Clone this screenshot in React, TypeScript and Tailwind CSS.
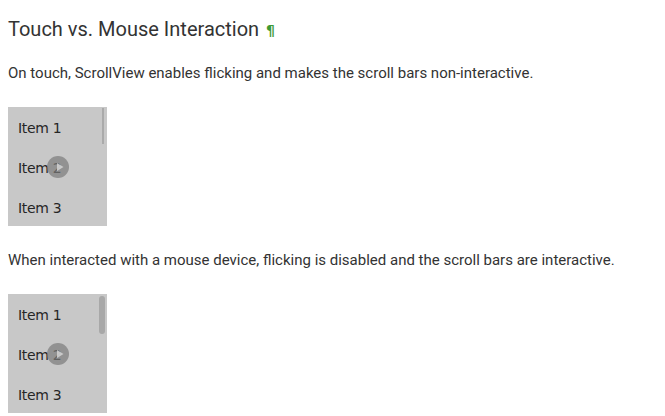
import React from "react";

function Cursor() {
  return (
    <span className="absolute left-[29px] top-[-2px] w-[22px] h-[22px] rounded-full bg-[#7a7a7a]/70 flex items-center justify-center">
      <svg width="12" height="12" viewBox="0 0 12 12" className="ml-[4px]">
        <path d="M3 2 L9.5 6 L3 10 Z" fill="#cfcfcf" fillOpacity="0.9" />
      </svg>
    </span>
  );
}

function Box({ wide }: { wide?: boolean }) {
  return (
    <div className="flex w-[99px] h-[119px] bg-[#c8c8c8] text-[14px] text-[#262626] font-['DejaVu_Sans',sans-serif]">
      <div className="flex-1 flex flex-col pl-[10px] pt-[11px] gap-[19px] leading-[21px] tracking-[-0.3px]">
        <div>Item 1</div>
        <div className="relative">
          Item 2
          <Cursor />
        </div>
        <div>Item 3</div>
      </div>
      {wide ? (
        <div className="mt-[2px] mr-[2px] w-[6px] h-[38px] rounded-full bg-[#a8a8a8]" />
      ) : (
        <div className="mt-[1px] mr-[3px] w-[2px] h-[36px] bg-[#aaaaaa]" />
      )}
    </div>
  );
}

export default function App() {
  return (
    <div className="bg-white w-[665px] h-[416px] overflow-hidden px-[8px] pt-[16px] flex flex-col gap-[24px] text-[#333333] font-['Roboto',sans-serif]">
      <h2 className="h-[23px] text-[20px] leading-[26px] font-normal flex items-start gap-[7px]">
        <span>Touch vs. Mouse Interaction</span>
        <span className="pt-[1px] text-[#3c9a35] text-[14px] leading-[26px] font-bold font-['DejaVu_Sans',sans-serif]">¶</span>
      </h2>
      <p className="text-[15px] leading-[20px]">
        On touch, ScrollView enables flicking and makes the scroll bars non-interactive.
      </p>
      <Box />
      <p className="text-[15px] leading-[20px]">
        When interacted with a mouse device, flicking is disabled and the scroll bars are interactive.
      </p>
      <Box wide />
    </div>
  );
}
